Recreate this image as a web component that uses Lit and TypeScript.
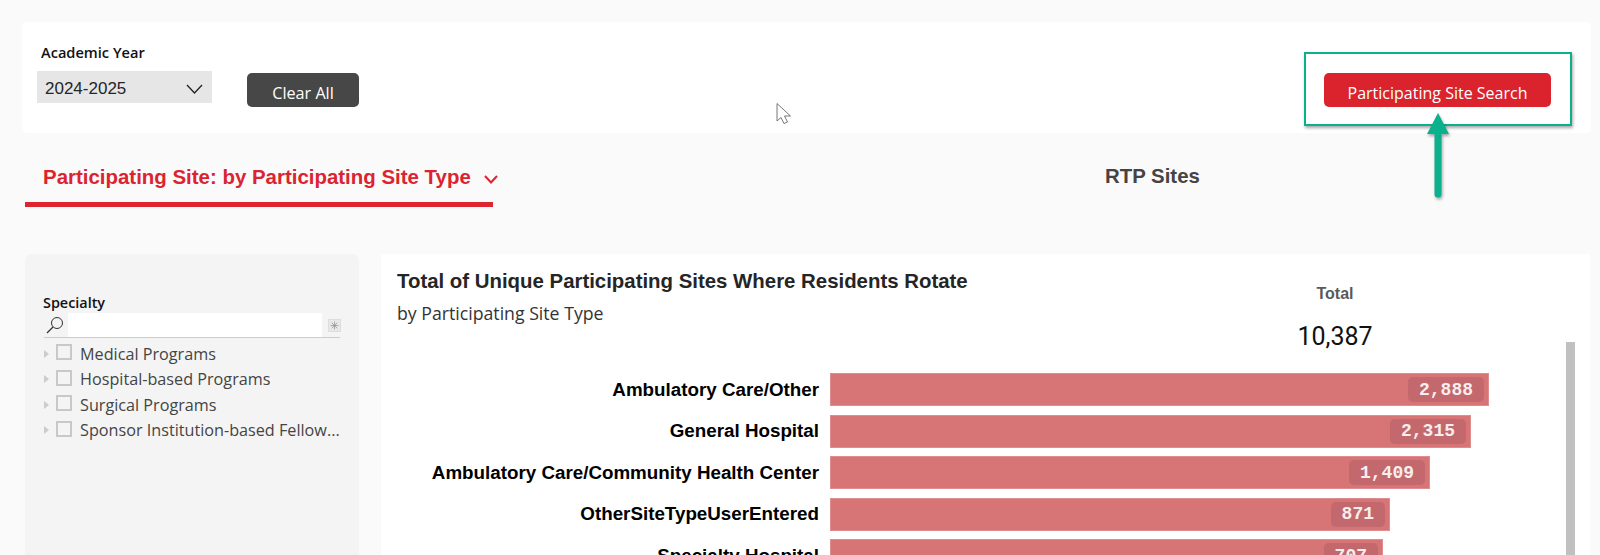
import { LitElement, html, css, svg } from "lit";
import { customElement } from "lit/decorators.js";

const bars = [
  { label: "Ambulatory Care/Other", value: "2,888", width: 659 },
  { label: "General Hospital", value: "2,315", width: 641 },
  { label: "Ambulatory Care/Community Health Center", value: "1,409", width: 600 },
  { label: "OtherSiteTypeUserEntered", value: "871", width: 560 },
  { label: "Specialty Hospital", value: "707", width: 553 },
];
const specialties = ["Medical Programs", "Hospital-based Programs", "Surgical Programs", "Sponsor Institution-based Fellow..."];

@customElement("app-root")
export class AppRoot extends LitElement {
  static styles = css`
    :host { display: block; width: 1600px; height: 555px; overflow: hidden; position: relative; background: #fafafa; font-family: "Liberation Sans", sans-serif; }
    .top { margin: 22px 9px 0 22px; height: 111px; background: #fff; border-radius: 4px; display: flex; box-sizing: border-box; padding: 21px 40px 0 15px; }
    .filter { width: 175px; margin-left: 0; flex: none; }
    .filter-label { font: 600 14.6px/19px "Open Sans", sans-serif; color: #111; padding-left: 4px; }
    .select { margin-top: 9px; height: 32px; background: #e6e6e6; display: flex; align-items: center; justify-content: space-between; padding: 4px 9px 0 8px; box-sizing: border-box; font-size: 17px; color: #252525; }
    .btn { border-radius: 5px; height: 34px; color: #fff; font-family: "Open Sans", sans-serif; display: flex; align-items: center; justify-content: center; box-sizing: border-box; padding-top: 6px; }
    .clear { margin: 30px 0 0 35px; width: 112px; background: #474747; font-size: 16.2px; }
    .search { margin: 30px 0 0 auto; width: 227px; background: #da232d; font-size: 16px; }
    .tabs { margin: 0 0 0 25px; height: 75px; display: flex; }
    .tab { width: 468px; height: 74px; box-sizing: border-box; border-bottom: 5px solid #dd2530; padding: 30px 0 0 18px; display: flex; font-weight: 700; font-size: 20.45px; line-height: 28px; color: #dc2430; white-space: nowrap; }
    .tab svg { margin: 12px 0 0 13px; flex: none; }
    .rtp { margin-left: 612px; padding-top: 29px; font-weight: 700; font-size: 20.4px; line-height: 28px; color: #444; }
    .main { margin: 46px 10px 0 25px; display: flex; gap: 22px; height: 320px; }
    .side { width: 334px; background: #f4f4f4; border-radius: 6px 6px 0 0; box-sizing: border-box; padding: 39px 19px 0 18px; flex: none; }
    .side-label { font: 600 14.4px/19px "Open Sans", sans-serif; color: #111; }
    .searchbar { height: 24px; border-bottom: 1px solid #ccc; display: flex; align-items: center; margin-top: 1px; margin-left: 1px; }
    .mag { width: 24px; flex: none; display: flex; padding-left: 2px; box-sizing: border-box; }
    .input { width: 254px; height: 24px; background: #fff; flex: none; }
    .star { margin-left: 6px; width: 13px; height: 13px; background: #e8e8e8; border: 1px solid #ddd; box-sizing: border-box; display: flex; }
    .tree { margin-top: 3px; }
    .node { height: 25.5px; display: flex; align-items: center; font: 400 16.2px/24px "Open Sans", sans-serif; color: #444; white-space: nowrap; }
    .tri { width: 0; height: 0; border-left: 5px solid #ccc; border-top: 4px solid transparent; border-bottom: 4px solid transparent; margin-left: 1px; flex: none; }
    .box { width: 16px; height: 16px; box-sizing: border-box; border: 2.5px solid #c8c8c8; margin: -3px 8px 0 7px; flex: none; }
    .chart { flex: 1; background: #fff; position: relative; padding: 0 0 0 16px; overflow: hidden; }
    .head { display: flex; height: 119px; }
    .titles { width: 898px; flex: none; padding-top: 14px; }
    .title { font-weight: 700; font-size: 20.4px; line-height: 26px; color: #252525; white-space: nowrap; }
    .sub { font: 400 17.7px/24px "Open Sans", sans-serif; color: #333; margin-top: 7px; }
    .total { width: 80px; text-align: center; padding-top: 29px; }
    .total-label { font-weight: 700; font-size: 16px; line-height: 22px; color: #5a5a5a; }
    .total-value { font: 400 25px/30px "Liberation Sans Narrow", Roboto, sans-serif; color: #111; margin-top: 17px; }
    .rows { display: flex; flex-direction: column; gap: 8.6px; }
    .row { display: flex; align-items: center; height: 33px; }
    .name { width: 422px; text-align: right; font-weight: 700; font-size: 18.8px; color: #000; white-space: nowrap; margin-right: 11px; flex: none; }
    .bar { height: 33px; background: #d67476; box-shadow: inset 0 0 0 1px #e08d8f; display: flex; align-items: center; justify-content: flex-end; padding-right: 5px; box-sizing: border-box; }
    .pill { background: #c3686d; border-radius: 5px; height: 25px; padding: 0 11px; display: flex; align-items: center; font: 700 18px "Liberation Mono", monospace; color: #f8eeee; }
    .scroll { position: absolute; left: 1185px; top: 88px; bottom: 0; width: 9px; background: #c0c0c0; }
    .mark { position: absolute; left: 1304px; top: 52px; width: 268px; height: 74px; box-sizing: border-box; border: 2px solid #0bb08d; box-shadow: 1px 2px 3px rgba(0,0,0,.35); pointer-events: none; }
    .arrow { position: absolute; left: 1420px; top: 110px; filter: drop-shadow(1px 2px 1.5px rgba(0,0,0,.35)); }
    .cursor { position: absolute; left: 775px; top: 102px; }
  `;

  render() {
    return html`
      <div class="top">
        <div class="filter">
          <div class="filter-label">Academic Year</div>
          <div class="select">2024-2025
            <svg width="17" height="10" viewBox="0 0 17 10"><path d="M1 1l7.5 8L16 1" fill="none" stroke="#222" stroke-width="1.3"/></svg>
          </div>
        </div>
        <div class="btn clear">Clear All</div>
        <div class="btn search">Participating Site Search</div>
      </div>
      <div class="tabs">
        <div class="tab">Participating Site: by Participating Site Type
          <svg width="14" height="9" viewBox="0 0 14 9"><path d="M1 1l6 6.5L13 1" fill="none" stroke="#dc2430" stroke-width="2"/></svg>
        </div>
        <div class="rtp">RTP Sites</div>
      </div>
      <div class="main">
        <div class="side">
          <div class="side-label">Specialty</div>
          <div class="searchbar">
            <div class="mag"><svg width="18" height="18" viewBox="0 0 18 18"><circle cx="11" cy="7" r="5.5" fill="none" stroke="#333" stroke-width="1"/><path d="M7 11l-6 6" stroke="#333" stroke-width="1.2"/></svg></div>
            <div class="input"></div>
            <div class="star"><svg width="11" height="11" viewBox="0 0 11 11"><path d="M5.5 1.5v8M1.5 5.5h8M2.7 2.7l5.6 5.6M8.3 2.7l-5.6 5.6" stroke="#999" stroke-width=".8"/></svg></div>
          </div>
          <div class="tree">
            ${specialties.map((s) => html`<div class="node"><div class="tri"></div><div class="box"></div><span>${s}</span></div>`)}
          </div>
        </div>
        <div class="chart">
          <div class="head">
            <div class="titles">
              <div class="title">Total of Unique Participating Sites Where Residents Rotate</div>
              <div class="sub">by Participating Site Type</div>
            </div>
            <div class="total">
              <div class="total-label">Total</div>
              <div class="total-value">10,387</div>
            </div>
          </div>
          <div class="rows">
            ${bars.map((b) => html`<div class="row"><div class="name">${b.label}</div><div class="bar" style="width:${b.width}px"><div class="pill">${b.value}</div></div></div>`)}
          </div>
          <div class="scroll"></div>
        </div>
      </div>
      <div class="mark"></div>
      <svg class="arrow" width="36" height="92" viewBox="0 0 36 92"><path d="M18 3L29 24H21.5V84a3.5 3.5 0 0 1-7 0V24H7Z" fill="#0bb08d"/></svg>
      <svg class="cursor" width="18" height="24" viewBox="0 0 18 24">${svg`<path d="M2 1.5V19l4-3.5 3 6 3.5-1.5-3-6h6Z" fill="#fff" stroke="#777" stroke-width="1"/>`}</svg>
    `;
  }
}
